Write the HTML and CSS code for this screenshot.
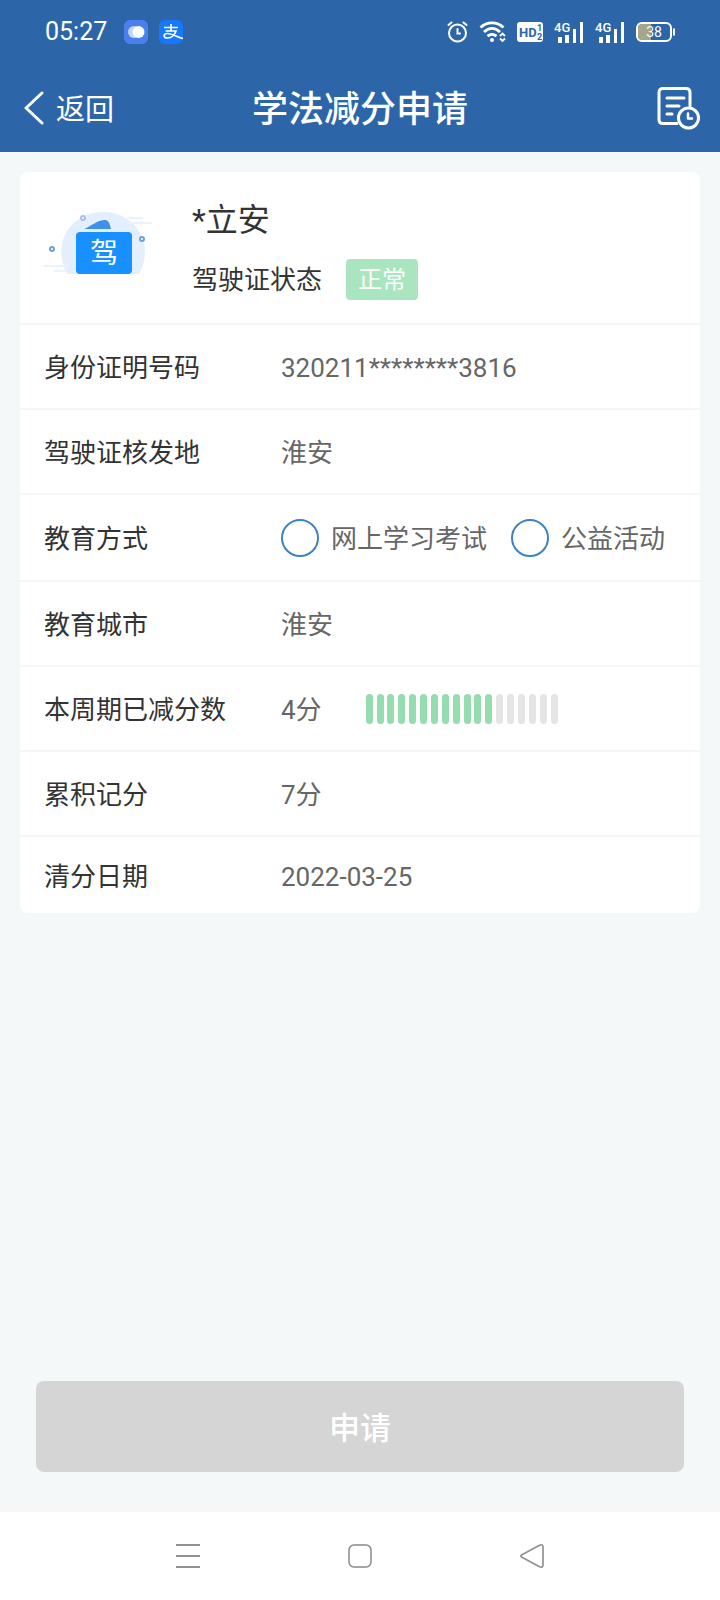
FILE: index.html
```html
<!DOCTYPE html>
<html lang="zh-CN">
<head>
    <meta charset="UTF-8">
    <meta name="viewport" content="width=device-width, initial-scale=1.0">
    <title>学法减分申请</title>
    <link rel="stylesheet" href="styles.css">
</head>
<body>
    <header class="top">
        <div class="status-bar">
            <span class="time">05:27</span>
            <svg class="app-icon" width="24" height="24" viewBox="0 0 24 24">
                <rect width="24" height="24" rx="6" fill="#4a7ff0"/>
                <circle cx="10" cy="12" r="6" fill="#c3d6fb"/>
                <circle cx="14.500" cy="12" r="6" fill="#fff"/>
            </svg>
            <svg class="app-icon" width="25" height="24" viewBox="0 0 25 24">
                <rect width="24" height="24" rx="6" fill="#1677ff"/>
                <path d="M5 7.500H19M12 4V11M6.500 11H17C16 14 13 18 8.500 18C4 18 4 13.500 8.500 13.500C13 13.500 18 17 24 18.500" fill="none" stroke="#fff" stroke-width="1.700"/>
            </svg>
            <div class="status-icons">
                <svg width="21" height="22" viewBox="0 0 21 22" fill="none" stroke="#fff" stroke-width="2" stroke-linecap="round">
                    <circle cx="10.500" cy="12" r="8.500"/>
                    <path d="M10.500 8V12.500H13M1.500 4L4.500 1.500M19.500 4L16.500 1.500"/>
                </svg>
                <svg width="27" height="22" viewBox="0 0 27 22" fill="none" stroke="#fff" stroke-width="2.800">
                    <path d="M1.500 6.500C8 0.300 18 0.300 24.500 6.500M5 11C10 6.300 16 6.300 21 11M8.500 15.200C11.500 12.700 14.500 12.700 17.500 15.200"/>
                    <circle cx="13" cy="19" r="2" fill="#fff" stroke="none"/>
                    <path d="M21 15L23.500 12.500L26 15M21 17.500L23.500 20L26 17.500" stroke-width="1.800"/>
                </svg>
                <svg width="26" height="20" viewBox="0 0 26 20">
                    <rect width="26" height="20" rx="3" fill="#fff"/>
                    <text class="hd" x="2" y="15">HD</text>
                    <text class="hd-small" x="20" y="9">1</text>
                    <text class="hd-small" x="20" y="18">2</text>
                </svg>
                <svg width="30" height="22" viewBox="0 0 30 22" fill="#fff">
                    <text class="net" x="0" y="11">4G</text>
                    <path d="M4 16H8V22H4ZM11 14H15V22H11ZM19 8H22V22H19ZM26 1H29V22H26Z"/>
                </svg>
                <svg width="30" height="22" viewBox="0 0 30 22" fill="#fff">
                    <text class="net" x="0" y="11">4G</text>
                    <path d="M4 16H8V22H4ZM11 14H15V22H11ZM19 8H22V22H19ZM26 1H29V22H26Z"/>
                </svg>
                <svg width="39" height="20" viewBox="0 0 39 20">
                    <path d="M6 2H15V18H6Q2 18 2 14V6Q2 2 6 2Z" fill="#a5a68c"/>
                    <rect x="1" y="1" width="34" height="18" rx="5" fill="none" stroke="#fff" stroke-width="2"/>
                    <path d="M38 6.500V13.500" stroke="#fff" stroke-width="2"/>
                    <text class="battery" x="18" y="15">38</text>
                </svg>
            </div>
        </div>
        <div class="title-bar">
            <a class="back" href="#">
                <svg width="20" height="34" viewBox="0 0 20 34" fill="none" stroke="#fff" stroke-width="3" stroke-linecap="round" stroke-linejoin="round">
                    <path d="M18 2L2 17L18 32"/>
                </svg>
                <span>返回</span>
            </a>
            <h1>学法减分申请</h1>
            <button class="history" type="button" aria-label="申请记录">
                <svg width="44" height="44" viewBox="0 0 44 44" fill="none" stroke="#fff" stroke-width="3" stroke-linecap="round" stroke-linejoin="round">
                    <path d="M21 37.500H7Q3 37.500 3 33.500V6.500Q3 2.500 7 2.500H30Q34 2.500 34 6.500V20M11 12H28M11 20H23M11 28H16"/>
                    <circle cx="32.500" cy="32" r="10"/>
                    <path d="M32 27.500V32.500H36" stroke-width="2.500"/>
                </svg>
            </button>
        </div>
    </header>

    <main>
        <form class="apply-form" id="applyForm">
            <section class="card">
                <div class="profile">
                    <svg class="licence" width="112" height="72" viewBox="1 0 112 72">
                        <path d="M24 64C8 32 28 2 60 2C94 2 112 36 96 64Z" fill="#e4effd"/>
                        <path d="M84 8H100M84 13H109M1 56H25M11 61H24" stroke="#eaf2fb" stroke-width="2"/>
                        <path d="M41 19C49 16 54 10 62 10C66 10 67 15 68 19Z" fill="#3e90ea"/>
                        <rect x="33" y="22" width="56" height="42" rx="4" fill="#1890ff"/>
                        <g fill="#fff" stroke="#6ba3d6" stroke-width="2">
                            <circle cx="9" cy="39" r="2"/>
                            <circle cx="40" cy="8" r="2" stroke="#a9bfe3"/>
                            <circle cx="99" cy="29" r="2"/>
                        </g>
                        <text x="61" y="53">驾</text>
                    </svg>
                    <div class="person">
                        <h2>*立安</h2>
                        <p>驾驶证状态 <span class="badge">正常</span></p>
                    </div>
                </div>
                <div class="row">
                    <span class="label">身份证明号码</span>
                    <span class="value">320211********3816</span>
                </div>
                <div class="row">
                    <span class="label">驾驶证核发地</span>
                    <span class="value">淮安</span>
                </div>
                <div class="row row-radio" role="radiogroup" aria-labelledby="modeLabel">
                    <span class="label" id="modeLabel">教育方式</span>
                    <div class="value options">
                        <label for="online"><input type="radio" name="mode" id="online"><span>网上学习考试</span></label>
                        <label for="welfare"><input type="radio" name="mode" id="welfare"><span>公益活动</span></label>
                    </div>
                </div>
                <div class="row">
                    <span class="label">教育城市</span>
                    <span class="value">淮安</span>
                </div>
                <div class="row">
                    <span class="label">本周期已减分数</span>
                    <div class="value score">
                        <span>4分</span>
                        <div class="bars">
                            <i class="on"></i><i class="on"></i><i class="on"></i><i class="on"></i><i class="on"></i><i class="on"></i>
                            <i class="on"></i><i class="on"></i><i class="on"></i><i class="on"></i><i class="on"></i><i class="on"></i>
                            <i></i><i></i><i></i><i></i><i></i><i></i>
                        </div>
                    </div>
                </div>
                <div class="row">
                    <span class="label">累积记分</span>
                    <span class="value">7分</span>
                </div>
                <div class="row row-last">
                    <span class="label">清分日期</span>
                    <span class="value">2022-03-25</span>
                </div>
            </section>
            <button class="submit" type="submit" disabled>申请</button>
        </form>
    </main>

    <nav class="system-nav">
        <button type="button" aria-label="菜单">
            <svg width="24" height="24" viewBox="0 0 24 24" stroke="#929292" stroke-width="2">
                <path d="M0 1H24M0 12H24M0 23H24"/>
            </svg>
        </button>
        <button type="button" aria-label="主页">
            <svg width="24" height="24" viewBox="0 0 24 24" fill="none" stroke="#888" stroke-width="1.500">
                <rect x="1" y="1" width="22" height="22" rx="5"/>
            </svg>
        </button>
        <button type="button" aria-label="后退">
            <svg width="24" height="24" viewBox="0 0 24 24" fill="none" stroke="#929292" stroke-width="1.700" stroke-linejoin="round">
                <path d="M1.500 11L19.500 1.200Q23 0 23 3V21Q23 24 19.500 22.800L1.500 13Q0.300 12 1.500 11Z"/>
            </svg>
        </button>
    </nav>

    <script>
        // The button can only be used after an education mode has been chosen
        const form = document.getElementById('applyForm');
        form.addEventListener('change', function() {
            form.querySelector('.submit').disabled = !form.querySelector('input[name="mode"]:checked');
        });
        form.addEventListener('submit', function(e) {
            e.preventDefault();
        });
    </script>
</body>
</html>
```
FILE: styles.css
```css
* {
    box-sizing: border-box;
}

body {
    display: flex;
    flex-direction: column;
    min-height: 100vh;
    margin: 0;
    background-color: #f4f8f8;
    color: #333;
    font-family: Roboto, "Noto Sans CJK SC", sans-serif;
    font-size: 26px;
    line-height: 36px;
}

h1,
h2,
p {
    margin: 0;
}

svg {
    display: block;
    flex-shrink: 0;
}

button {
    padding: 0;
    border: none;
    background: none;
    font-family: inherit;
    cursor: pointer;
}

/* Header */
.top {
    background-color: #2c66a9;
    color: #fff;
}

.status-bar {
    display: flex;
    align-items: center;
    height: 64px;
    padding: 0 45px;
}

.time {
    margin-right: 6px;
    font-size: 25px;
}

.app-icon {
    margin-left: 11px;
}

.status-icons {
    display: flex;
    align-items: center;
    gap: 11px;
    margin-left: auto;
}

.hd {
    font-size: 13px;
    font-weight: bold;
    fill: #2c66a9;
}

.hd-small {
    font-size: 9px;
    font-weight: bold;
    fill: #2c66a9;
}

.net {
    font-size: 13px;
    font-weight: 500;
}

.battery {
    font-size: 14px;
    fill: #fff;
    text-anchor: middle;
}

.title-bar {
    display: grid;
    grid-template-columns: 1fr auto 1fr;
    align-items: center;
    height: 88px;
    padding: 0 20px;
}

.back {
    display: flex;
    align-items: center;
    gap: 12px;
    margin-left: 4px;
    color: #fff;
    font-size: 29px;
    text-decoration: none;
}

.back span,
.title-bar h1 {
    padding-top: 4px;
}

.title-bar h1 {
    font-size: 36px;
    font-weight: 500;
}

.history {
    justify-self: end;
}

/* Content */
main,
.apply-form {
    display: flex;
    flex: 1;
    flex-direction: column;
}

.apply-form {
    padding: 20px 20px 32px;
}

.card {
    border-radius: 8px;
    background-color: #fff;
}

.profile {
    display: flex;
    gap: 36px;
    height: 151px;
    padding: 28px 24px 0;
}

.licence {
    margin-top: 10px;
}

.licence text {
    font-size: 28px;
    fill: #fff;
    text-anchor: middle;
}

.person h2 {
    margin-bottom: 19px;
    font-size: 32px;
    font-weight: 400;
    line-height: 40px;
}

.person p {
    display: flex;
    align-items: center;
    gap: 24px;
    height: 41px;
}

.badge {
    height: 41px;
    padding: 2px 12px 0;
    border-radius: 4px;
    background-color: #a9e6c0;
    color: #fff;
    font-size: 24px;
    line-height: 39px;
}

.row {
    display: flex;
    align-items: center;
    height: 85px;
    padding: 0 24px;
    border-top: 2px solid #f4f5f5;
}

.row span {
    padding-top: 3px;
}

.row-radio {
    height: 87px;
}

.row-last {
    height: 78px;
}

.label {
    flex: 0 0 237px;
}

.value {
    color: #666;
}

.options,
.options label {
    display: flex;
    align-items: center;
}

.options {
    gap: 24px;
    white-space: nowrap;
}

.options label {
    gap: 12px;
}

.options input {
    appearance: none;
    width: 38px;
    height: 38px;
    margin: 0;
    border: 2px solid #3d82c4;
    border-radius: 50%;
}

.options input:checked {
    background-color: #3d82c4;
    box-shadow: inset 0 0 0 6px #fff;
}

.score {
    display: flex;
    align-items: center;
    gap: 44px;
}

.bars {
    display: flex;
    justify-content: space-between;
    width: 192px;
}

.bars i {
    width: 7px;
    height: 30px;
    border-radius: 4px;
    background-color: #e5e5e5;
}

.bars .on {
    background-color: #95dcaf;
}

.submit {
    height: 91px;
    margin: auto 16px 0;
    padding-bottom: 2px;
    border-radius: 8px;
    background-color: #2c66a9;
    color: #fff;
    font-size: 31px;
    font-weight: 500;
}

.submit:disabled {
    background-color: #d5d5d5;
    cursor: default;
}

/* Bottom bar */
.system-nav {
    display: grid;
    grid-template-columns: repeat(3, 1fr);
    justify-items: center;
    height: 96px;
    padding: 0 102px;
    border-top: 8px solid #f7f7f7;
    background-color: #fff;
}
```
